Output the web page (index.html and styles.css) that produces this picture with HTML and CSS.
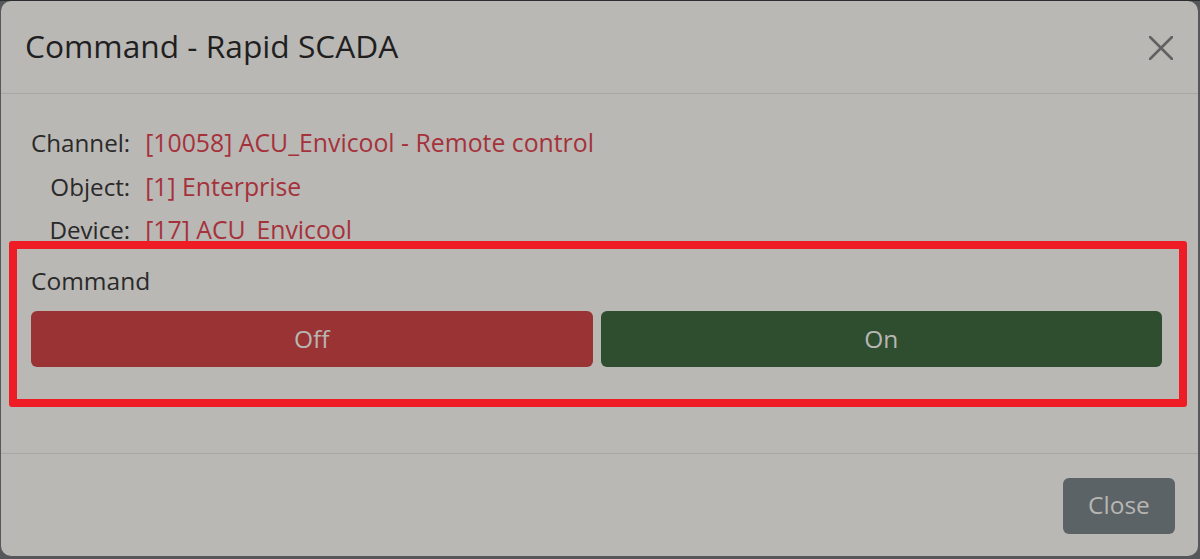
FILE: index.html
```html
<!DOCTYPE html>
<html lang="en">
<head>
<meta charset="utf-8">
<title>Command - Rapid SCADA</title>
<link rel="stylesheet" href="styles.css">
</head>
<body>
<div class="modal">
  <div class="modal-header">
    <h5 class="modal-title">Command - Rapid SCADA</h5>
    <button class="btn-close" type="button" aria-label="Close">
      <svg viewBox="0 0 24 24" width="24" height="24"><path d="M1 1 L23 23 M23 1 L1 23" stroke="#616161" stroke-width="2.6" stroke-linecap="round" fill="none"/></svg>
    </button>
  </div>
  <div class="modal-body">
    <div class="info">
      <div class="lbl">Channel:</div><div class="val">[10058] ACU_Envicool - Remote control</div>
      <div class="lbl">Object:</div><div class="val">[1] Enterprise</div>
      <div class="lbl">Device:</div><div class="val">[17] ACU_Envicool</div>
    </div>
    <div class="command">
      <div class="cmd-label">Command</div>
      <div class="cmd-buttons">
        <button class="btn btn-off" type="button">Off</button>
        <button class="btn btn-on" type="button">On</button>
      </div>
    </div>
  </div>
  <div class="modal-footer">
    <button class="btn btn-close-footer" type="button">Close</button>
  </div>
  <div class="highlight"></div>
</div>
</body>
</html>
```
FILE: styles.css
```css
html, body {
  margin: 0;
  padding: 0;
}
body {
  background: #56575a;
  border-top: 1px solid #2b2d30;
  padding: 0 2px 3px 1px;
  height: 558px;
  box-sizing: border-box;
  font-family: "Open Sans", "Noto Sans", sans-serif;
  overflow: hidden;
}
.modal {
  position: relative;
  background: #bab8b5;
  border-radius: 10px;
  height: 555px;
  display: flex;
  flex-direction: column;
  color: #222;
}
.modal-header {
  height: 92px;
  border-bottom: 1px solid #a9a7a4;
  display: flex;
  align-items: center;
  justify-content: space-between;
  padding: 0 24px 0 24px;
}
.modal-title {
  margin: 0;
  font-size: 31.7px;
  font-weight: 400;
  color: #1f1f1f;
  line-height: 1.5;
  padding-bottom: 2px;
}
.btn-close {
  background: none;
  border: 0;
  padding: 0;
  width: 24px;
  height: 24px;
  margin-right: 1px;
  margin-top: 2px;
  display: flex;
}
.modal-body {
  flex: 1;
  padding: 31px 36px 0 30px;
}
.info {
  display: grid;
  grid-template-columns: max-content 1fr;
  column-gap: 15px;
  row-gap: 8px;
  font-size: 24.8px;
  line-height: 35.5px;
}
.lbl {
  text-align: right;
  color: #2a2a2a;
  font-size: 24.2px;
}
.val {
  color: #a5323b;
}
.command {
  margin-top: 15px;
}
.cmd-label {
  font-size: 24.5px;
  line-height: 36px;
  color: #2a2a2a;
}
.cmd-buttons {
  margin-top: 12px;
  display: grid;
  grid-template-columns: 1fr 1fr;
  column-gap: 8px;
}
.btn {
  font-family: inherit;
  font-size: 24.5px;
  height: 56px;
  border: 0;
  border-radius: 6px;
  color: #b7b6b3;
  padding: 0 20px;
}
.btn-off {
  background: #9a3334;
}
.btn-on {
  background: #2f4e2f;
}
.modal-footer {
  height: 103px;
  border-top: 1px solid #a9a7a4;
  display: flex;
  justify-content: flex-end;
  align-items: flex-start;
  padding: 24px 23px 0 0;
  box-sizing: border-box;
}
.btn-close-footer {
  background: #5c6366;
  width: 112px;
  padding: 0 0 3px 0;
}
.highlight {
  position: absolute;
  left: 8px;
  top: 240px;
  width: 1178px;
  height: 166px;
  box-sizing: border-box;
  border: 8px solid #ee1c25;
  border-radius: 3px;
  pointer-events: none;
}
```
